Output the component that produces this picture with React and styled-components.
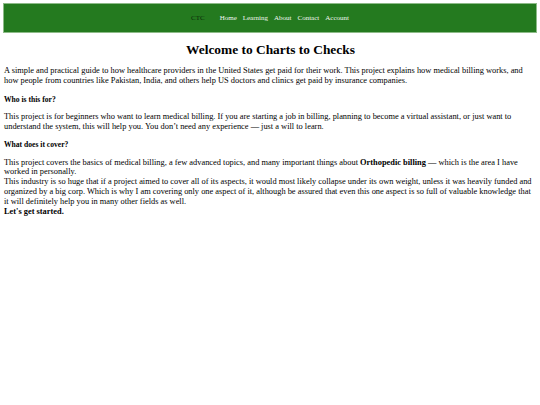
import React from 'react'
import styled, { createGlobalStyle } from 'styled-components'

const GlobalStyle = createGlobalStyle`
  html, body {
    margin: 0;
    padding: 0;
    background: #ffffff;
  }
  body {
    padding: 3px 3px;
    font-family: "Liberation Serif", "Times New Roman", serif;
    font-size: 8.4px;
    color: #000;
  }
`

const Header = styled.header`
  height: 28px;
  background-color: #247a1f;
  border: 1px solid #8dbb88;
  display: flex;
  align-items: center;
  justify-content: center;
`

const Nav = styled.nav`
  display: flex;
  align-items: center;
  gap: 15px;
  font-size: 7px;
`

const Logo = styled.span`
  color: #0b2a0a;
`

const Links = styled.ul`
  display: flex;
  gap: 6px;
  list-style: none;
  margin: 0;
  padding: 0;
`

const NavLink = styled.a`
  color: #f2f7f1;
  text-decoration: none;
`

const Main = styled.main`
  padding: 0 0 0 1px;
`

const Title = styled.h1`
  text-align: center;
  font-size: 13.4px;
  line-height: 15.4px;
  margin: 9px 0;
`

const Para = styled.p`
  margin: ${p => (p.$tight ? '8.2px 0 0' : '8.2px 0')};
  line-height: 9.8px;
`

const Question = styled.h4`
  font-size: 7.6px;
  margin: 8.5px 0;
  line-height: 9px;
`

const Block = styled.div`
  line-height: 9.8px;
`

const links = ['Home', 'Learning', 'About', 'Contact', 'Account']

export default function App() {
  return (
    <>
      <GlobalStyle />
      <Header>
        <Nav>
          <Logo>CTC</Logo>
          <Links>
            {links.map(l => (
              <li key={l}>
                <NavLink href="#">{l}</NavLink>
              </li>
            ))}
          </Links>
        </Nav>
      </Header>
      <Main>
        <Title>Welcome to Charts to Checks</Title>
        <Para>
          A simple and practical guide to how healthcare providers in the United States get paid for their work. This project explains how medical billing works, and how people from countries like Pakistan, India, and others help US doctors and clinics get paid by insurance companies.
        </Para>
        <Question>Who is this for?</Question>
        <Para>
          This project is for beginners who want to learn medical billing. If you are starting a job in billing, planning to become a virtual assistant, or just want to understand the system, this will help you. You don’t need any experience — just a will to learn.
        </Para>
        <Question>What does it cover?</Question>
        <Para $tight>
          This project covers the basics of medical billing, a few advanced topics, and many important things about <strong>Orthopedic billing</strong> — which is the area I have worked in personally.
        </Para>
        <Block>
          This industry is so huge that if a project aimed to cover all of its aspects, it would most likely collapse under its own weight, unless it was heavily funded and organized by a big corp. Which is why I am covering only one aspect of it, although be assured that even this one aspect is so full of valuable knowledge that it will definitely help you in many other fields as well.
          <br />
          <strong>Let's get started.</strong>
        </Block>
      </Main>
    </>
  )
}
